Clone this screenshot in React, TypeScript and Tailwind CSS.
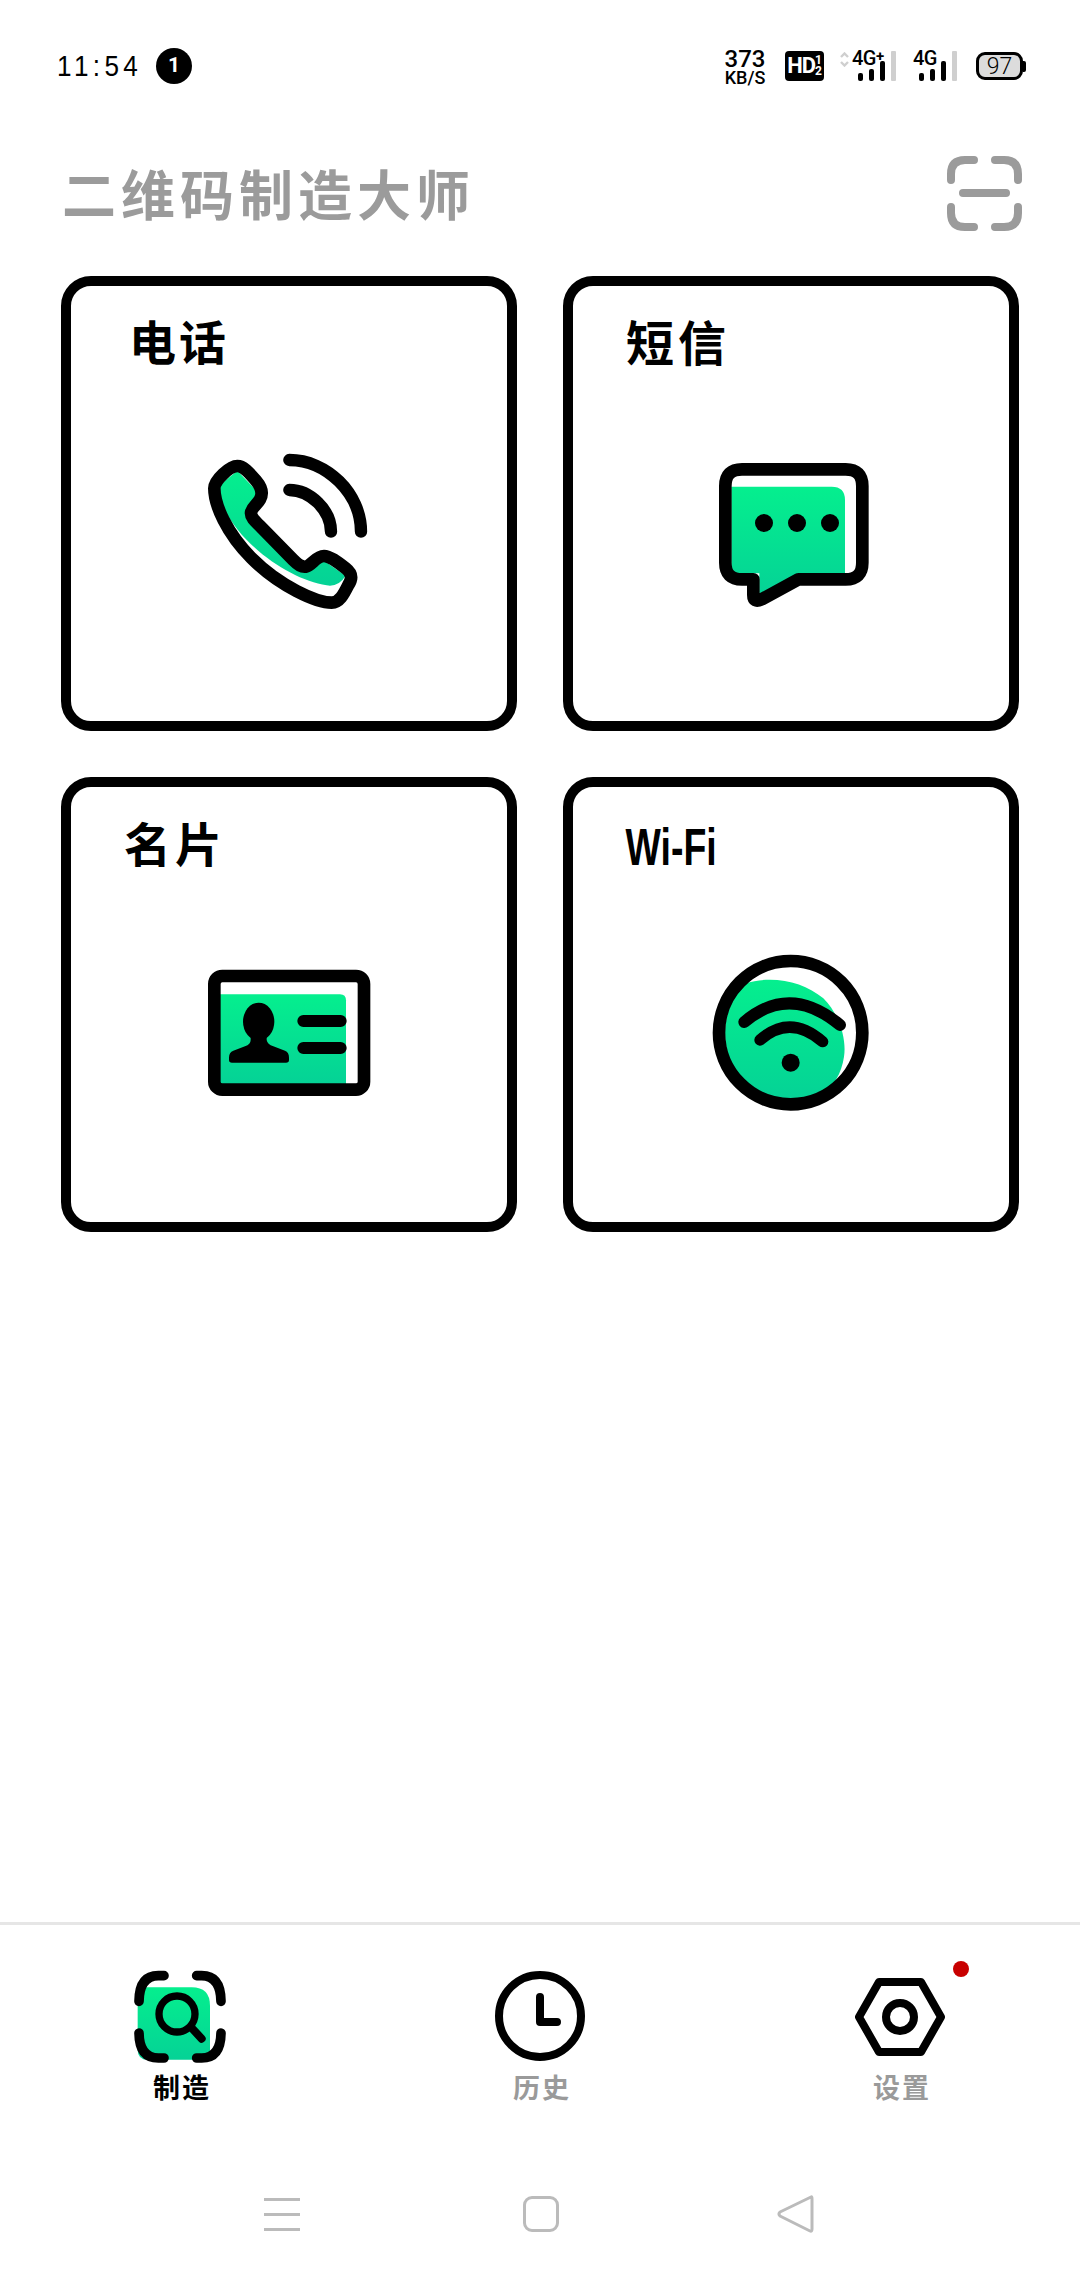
import type { ReactNode } from 'react';

const cjk = "font-['Noto_Sans_CJK_SC','Noto_Sans_CJK_TC',sans-serif]";

function Gradient({ id, y1, y2 }: { id: string; y1: number; y2: number }) {
  return (
    <defs>
      <linearGradient id={id} gradientUnits="userSpaceOnUse" x1="0" x2="0" y1={y1} y2={y2}>
        <stop offset="0" stopColor="#05ef8e" />
        <stop offset="1" stopColor="#05d296" />
      </linearGradient>
    </defs>
  );
}

function PhoneIcon() {
  return (
    <svg viewBox="0 0 660 600" className="w-[220px] h-[200px] ml-[109px]" fill="none">
      <Gradient id="g-phone" y1={120} y2={470} />
      <path
        d="M120 165 L172 122 L232 185 L213 250 L370 412 L432 392 L497 437 Q475 472 440 466 C330 450 170 340 122 212 Z"
        fill="url(#g-phone)"
      />
      <path
        d="M172 108 C190 108 205 125 228 152 C245 172 250 190 240 208 C232 224 213 232 213 250 C213 264 228 276 240 288 L340 390 C355 405 365 412 378 410 C396 406 408 378 432 378 C450 378 475 398 497 415 C516 430 518 445 505 465 C490 495 478 518 455 518 C410 518 300 470 215 385 C140 310 103 225 103 175 C103 150 150 108 172 108 Z"
        stroke="#000"
        strokeWidth="38"
        strokeLinejoin="round"
      />
      <path d="M328 90 C440 90 543 190 543 305 M328 180 C390 180 453 240 453 305" stroke="#000" strokeWidth="37" strokeLinecap="round" />
    </svg>
  );
}

function MessageIcon() {
  return (
    <svg viewBox="0 0 600 540" className="w-[200px] h-[180px] ml-[117px] mt-[10px]" fill="none">
      <Gradient id="g-msg" y1={140} y2={470} />
      <path d="M124 140 H425 Q465 140 465 180 V400 H325 L208 465 V400 H124 Z" fill="url(#g-msg)" />
      <path
        d="M156 88 H467 Q517 88 517 138 V368 Q517 418 467 418 H325 L215 478 Q190 490 190 465 V418 H156 Q106 418 106 368 V138 Q106 88 156 88 Z"
        stroke="#000"
        strokeWidth="38"
        strokeLinejoin="round"
      />
      <circle cx="222" cy="249" r="27" fill="#000" />
      <circle cx="321" cy="249" r="27" fill="#000" />
      <circle cx="420" cy="249" r="27" fill="#000" />
    </svg>
  );
}

function ContactIcon() {
  return (
    <svg viewBox="0 0 600 480" className="w-[200px] h-[160px] ml-[119px] mt-[14px]" fill="none">
      <Gradient id="g-card" y1={148} y2={417} />
      <path d="M90 148 H450 Q468 148 468 166 V418 H90 Z" fill="url(#g-card)" />
      <rect x="73" y="93" width="449" height="341" rx="24" stroke="#000" strokeWidth="38" />
      <ellipse cx="206" cy="230" rx="47" ry="57" fill="#000" />
      <path
        d="M182 270 H230 V285 Q232 298 250 304 L285 317 Q297 322 297 338 V345 Q297 353 288 353 H126 Q117 353 117 345 V338 Q117 322 130 317 L165 304 Q182 298 182 285 Z"
        fill="#000"
      />
      <path d="M340 228 H452 M340 309 H452" stroke="#000" strokeWidth="36" strokeLinecap="round" />
    </svg>
  );
}

function WifiIcon() {
  return (
    <svg viewBox="0 0 600 540" className="w-[200px] h-[180px] ml-[117px] mt-[9px]" fill="none">
      <Gradient id="g-wifi" y1={118} y2={480} />
      <path
        d="M165 130 C250 105 340 125 400 175 C450 225 470 300 462 350 C455 400 430 440 400 460 L300 482 C200 482 105 400 105 280 C105 220 130 165 165 130 Z"
        fill="url(#g-wifi)"
      />
      <circle cx="302" cy="278" r="215" stroke="#000" strokeWidth="38" />
      <path d="M163 246 Q300 130 450 255" stroke="#000" strokeWidth="36" strokeLinecap="round" />
      <path d="M210 300 Q300 220 398 305" stroke="#000" strokeWidth="34" strokeLinecap="round" />
      <circle cx="302" cy="368" r="27" fill="#000" />
    </svg>
  );
}

function ScanTabIcon() {
  return (
    <svg viewBox="90 77 300 300" className="w-[100px] h-[100px]" fill="none">
      <Gradient id="g-scan" y1={138} y2={355} />
      <path d="M143 138 H275 Q330 138 330 193 V355 H143 Q113 355 113 325 V168 Q113 138 143 138 Z" fill="url(#g-scan)" />
      <path
        d="M192 103 H175 Q118 103 117 180 M290 103 H305 Q362 103 363 180 M117 275 Q118 350 175 350 H192 M363 275 Q362 350 305 350 H290"
        stroke="#000"
        strokeWidth="29"
        strokeLinecap="round"
      />
      <circle cx="231" cy="218" r="54" stroke="#000" strokeWidth="22" />
      <path d="M278 263 L305 292" stroke="#000" strokeWidth="24" strokeLinecap="round" />
    </svg>
  );
}

function ClockTabIcon() {
  return (
    <svg viewBox="0 0 100 100" className="w-[100px] h-[100px]" fill="none">
      <circle cx="50" cy="49" r="41" stroke="#000" strokeWidth="8" />
      <path d="M50 30 V55 H67" stroke="#000" strokeWidth="8" strokeLinecap="round" strokeLinejoin="round" />
    </svg>
  );
}

function SettingsTabIcon() {
  return (
    <svg viewBox="0 0 100 100" className="w-[100px] h-[100px]" fill="none">
      <path d="M29 15 H71 L91 50 L71 85 H29 L9 50 Z" stroke="#000" strokeWidth="8" strokeLinejoin="round" />
      <circle cx="50" cy="50" r="14" stroke="#000" strokeWidth="8" />
    </svg>
  );
}

function Signal({ label, plus, arrows }: { label: string; plus?: boolean; arrows?: boolean }) {
  return (
    <div className="flex items-end">
      {arrows && (
        <svg viewBox="0 0 9 15" className="w-[9px] h-[15px] mr-[3px] mb-[14px]" fill="none">
          <path d="M1 5 L4.5 1.5 L8 5 M1 10 L4.5 13.5 L8 10" stroke="#cfcfcf" strokeWidth="2.4" />
        </svg>
      )}
      <div className="flex flex-col w-[39px] h-[30px]">
        <span className="font-['Roboto',sans-serif] font-medium text-[20px] leading-[15px] h-[17px] tracking-[-0.5px] text-black whitespace-nowrap">
          {label}
          {plus && <span className="text-[15px] font-bold align-top leading-[10px]">+</span>}
        </span>
        <div className="flex items-end gap-[6px] h-[20px] -mt-[7px] pl-[6px]">
          <div className="w-[5px] h-[8px] rounded-[2px] bg-black" />
          <div className="w-[5px] h-[12px] rounded-[2px] bg-black" />
          <div className="w-[5px] h-[20px] rounded-[2px] bg-black" />
        </div>
      </div>
      <div className="w-[5px] h-[30px] rounded-[1px] bg-[#cfcfcf]" />
    </div>
  );
}

function StatusBar() {
  return (
    <div className="h-[120px] pt-[48px] pl-[57px] pr-[54px] flex justify-between items-start">
      <div className="flex items-center h-[36px]">
        <span className="font-['Liberation_Sans',sans-serif] text-[30px] leading-[36px] tracking-[5px] text-black w-[99px] scale-x-[0.87] origin-left whitespace-nowrap">
          11:54
        </span>
        <span className="w-[36px] h-[36px] rounded-full bg-black text-white flex items-center justify-center font-['Roboto',sans-serif] font-bold text-[21px]">
          1
        </span>
      </div>
      <div className="flex items-start text-black">
        <div className="flex flex-col items-center w-[44px] font-['Roboto',sans-serif] font-medium">
          <span className="text-[24px] leading-[22px]">373</span>
          <span className="text-[18px] leading-[16px]">KB/S</span>
        </div>
        <div className="ml-[18px] mt-[3px] w-[39px] h-[30px] rounded-[4px] bg-black text-white flex items-center justify-center font-['Roboto',sans-serif] font-bold text-[22px] tracking-[-1px] leading-none">
          HD
          <span className="flex flex-col text-[12px] leading-[11px] font-bold tracking-normal">
            <span>1</span>
            <span>2</span>
          </span>
        </div>
        <div className="ml-[16px] mt-[3px]">
          <Signal label="4G" plus arrows />
        </div>
        <div className="ml-[17px] mt-[3px]">
          <Signal label="4G" />
        </div>
        <div className="ml-[19px] mt-[4px] flex items-center">
          <div className="w-[47px] h-[28px] rounded-[9px] border-[3px] border-black bg-[#dcdcdc] flex items-center justify-center font-['Roboto',sans-serif] font-light text-[23px] leading-none">
            97
          </div>
          <div className="w-[3px] h-[11px] rounded-r-[2px] bg-black" />
        </div>
      </div>
    </div>
  );
}

function Card({ labelClass, label, children }: { labelClass: string; label: string; children: ReactNode }) {
  return (
    <div className="w-[456px] h-[455px] box-border border-[10px] border-black rounded-[30px] bg-white flex flex-col items-start">
      <div className={labelClass}>{label}</div>
      {children}
    </div>
  );
}

function Tab({ label, active, children }: { label: string; active?: boolean; children: ReactNode }) {
  return (
    <div className="flex flex-col items-center">
      {children}
      <span
        className={`${cjk} font-bold text-[27px] leading-[34px] mt-[3px] ml-[4px] tracking-[2px] ${active ? 'text-black' : 'text-[#9a9a9a]'}`}
      >
        {label}
      </span>
    </div>
  );
}

export default function App() {
  return (
    <div className="w-[1080px] h-[2280px] bg-white flex flex-col overflow-hidden">
      <StatusBar />

      {/* Title */}
      <div className="h-[146px] mb-[10px] pl-[62px] pr-[58px] flex items-center justify-between">
        <h1 className={`${cjk} font-bold text-[54px] leading-none tracking-[5px] text-[#9b9b9b] whitespace-nowrap`}>
          二维码制造大师
        </h1>
        <svg viewBox="0 0 75 75" className="w-[75px] h-[75px]" fill="none">
          <path
            d="M4 24 V18 Q4 4 18 4 H27 M48 4 H57 Q71 4 71 18 V24 M4 51 V57 Q4 71 18 71 H27 M48 71 H57 Q71 71 71 57 V51"
            stroke="#9b9b9b"
            strokeWidth="8"
            strokeLinecap="round"
          />
          <path d="M16 37 H59" stroke="#9b9b9b" strokeWidth="8" strokeLinecap="round" />
        </svg>
      </div>

      {/* Cards */}
      <div className="pl-[61px] grid grid-cols-[456px_456px] gap-x-[46px] gap-y-[46px]">
        <Card label="电话" labelClass={`h-[144px] pl-[58px] pt-[23px] ${cjk} font-bold text-[47px] leading-[62px] tracking-[3px] text-black`}>
          <PhoneIcon />
        </Card>
        <Card label="短信" labelClass={`h-[144px] pl-[53px] pt-[23px] ${cjk} font-bold text-[48px] leading-[62px] tracking-[4px] text-black`}>
          <MessageIcon />
        </Card>
        <Card label="名片" labelClass={`h-[144px] pl-[53px] pt-[24px] ${cjk} font-bold text-[47px] leading-[62px] tracking-[4px] text-black`}>
          <ContactIcon />
        </Card>
        <Card
          label="Wi-Fi"
          labelClass="h-[144px] pl-[73px] pt-[29px] font-['Liberation_Sans',sans-serif] font-bold text-[52px] leading-[62px] text-black origin-left scale-x-[0.72]"
        >
          <WifiIcon />
        </Card>
      </div>

      {/* Tab bar */}
      <div className="mt-auto border-t-[3px] border-[#e6e6e6] pt-[42px] grid grid-cols-[360px_360px_360px] justify-items-center">
        <Tab label="制造" active>
          <ScanTabIcon />
        </Tab>
        <Tab label="历史">
          <ClockTabIcon />
        </Tab>
        <Tab label="设置">
          <div className="relative">
            <SettingsTabIcon />
            <span className="absolute left-[103px] -top-[6px] w-[16px] h-[16px] rounded-full bg-[#c80000]" />
          </div>
        </Tab>
      </div>

      {/* Navigation bar */}
      <div className="mt-[90px] mb-[46px] h-[40px] pl-[264px] flex items-center">
        <div className="w-[36px] flex flex-col gap-[12px]">
          <div className="h-[3px] bg-[#bbbbbb]" />
          <div className="h-[3px] bg-[#bbbbbb]" />
          <div className="h-[3px] bg-[#bbbbbb]" />
        </div>
        <div className="ml-[223px] w-[36px] h-[36px] rounded-[9px] border-[3px] border-[#bbbbbb]" />
        <svg viewBox="0 0 37 40" className="ml-[218px] w-[37px] h-[40px]" fill="none">
          <path d="M34 3 Q35 2.5 35 5 V35 Q35 38 33 37 L3 22 Q1 20 3 18 Z" stroke="#bbbbbb" strokeWidth="3" strokeLinejoin="round" />
        </svg>
      </div>
    </div>
  );
}
